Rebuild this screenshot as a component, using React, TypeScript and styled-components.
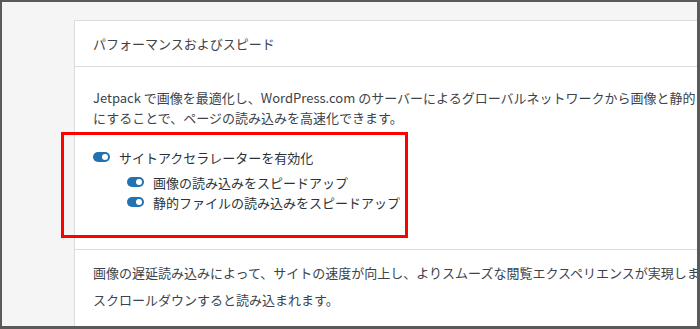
import React from 'react';
import styled, { createGlobalStyle } from 'styled-components';

const GlobalStyle = createGlobalStyle`
    html, body {
        margin: 0;
        padding: 0;
    }
    body {
        font-family: "Noto Sans CJK JP", "Noto Sans", sans-serif;
        color: #3c434a;
    }
`;

const Frame = styled.div`
    box-sizing: border-box;
    width: 700px;
    height: 329px;
    overflow: hidden;
    background-color: #f5f5f5;
    border-style: solid;
    border-color: #5a5a5a;
    border-width: 2px 3px 3px 2px;
    padding: 18px 0 0 72px;
`;

const Card = styled.div`
    width: 700px;
    background-color: #fff;
    border: 1px solid #dcdcde;
`;

const Header = styled.div`
    box-sizing: border-box;
    height: 46px;
    display: flex;
    align-items: center;
    padding: 0 18px;
    border-bottom: 1px solid #dcdcde;
    font-size: 13px;
    color: #3c434a;
`;

const Section = styled.div<{ $top: number; $bottom: number }>`
    padding: ${p => p.$top}px 18px ${p => p.$bottom}px;
    border-bottom: 1px solid #dcdcde;
`;

const Text = styled.p<{ $lh: number }>`
    margin: 0;
    font-size: 13px;
    line-height: ${p => p.$lh}px;
    white-space: nowrap;
    color: #3c434a;
`;

const ToggleGroup = styled.div`
    position: relative;
    margin-top: 19px;
    display: flex;
    flex-direction: column;
`;

// red annotation frame drawn over the toggle settings
const Highlight = styled.div`
    position: absolute;
    left: -32px;
    top: -15px;
    width: 347px;
    height: 106px;
    box-sizing: border-box;
    border: 3px solid #f00;
    pointer-events: none;
`;

const SubList = styled.div`
    display: flex;
    flex-direction: column;
    margin-top: 5px;
    padding-left: 34px;
`;

const Row = styled.label`
    display: flex;
    align-items: center;
    gap: 9px;
    height: 20px;
    font-size: 13px;
    color: #2c3338;
    white-space: nowrap;
`;

const Toggle = styled.span`
    position: relative;
    flex: none;
    width: 17px;
    height: 10px;
    border-radius: 5px;
    background-color: #2271b1;

    &::after {
        content: '';
        position: absolute;
        right: 2px;
        top: 2px;
        width: 6px;
        height: 6px;
        border-radius: 50%;
        background-color: #fff;
    }
`;

const ToggleRow: React.FC<{ label: string }> = ({ label }) => (
    <Row>
        <Toggle />
        {label}
    </Row>
);

const App: React.FC = () => {
    return (
        <>
            <GlobalStyle />
            <Frame>
                <Card>
                    <Header>パフォーマンスおよびスピード</Header>
                    <Section $top={21} $bottom={37}>
                        <Text $lh={20}>
                            Jetpack で画像を最適化し、WordPress.com のサーバーによるグローバルネットワークから画像と静的ファイルを配信できるよう
                            <br />
                            にすることで、ページの読み込みを高速化できます。
                        </Text>
                        <ToggleGroup>
                            <Highlight />
                            <ToggleRow label="サイトアクセラレーターを有効化" />
                            <SubList>
                                <ToggleRow label="画像の読み込みをスピードアップ" />
                                <ToggleRow label="静的ファイルの読み込みをスピードアップ" />
                            </SubList>
                        </ToggleGroup>
                    </Section>
                    <Section $top={9} $bottom={20}>
                        <Text $lh={27}>
                            画像の遅延読み込みによって、サイトの速度が向上し、よりスムーズな閲覧エクスペリエンスが実現します。画像は訪問者が画面を
                            <br />
                            スクロールダウンすると読み込まれます。
                        </Text>
                    </Section>
                </Card>
            </Frame>
        </>
    );
};

export default App;
